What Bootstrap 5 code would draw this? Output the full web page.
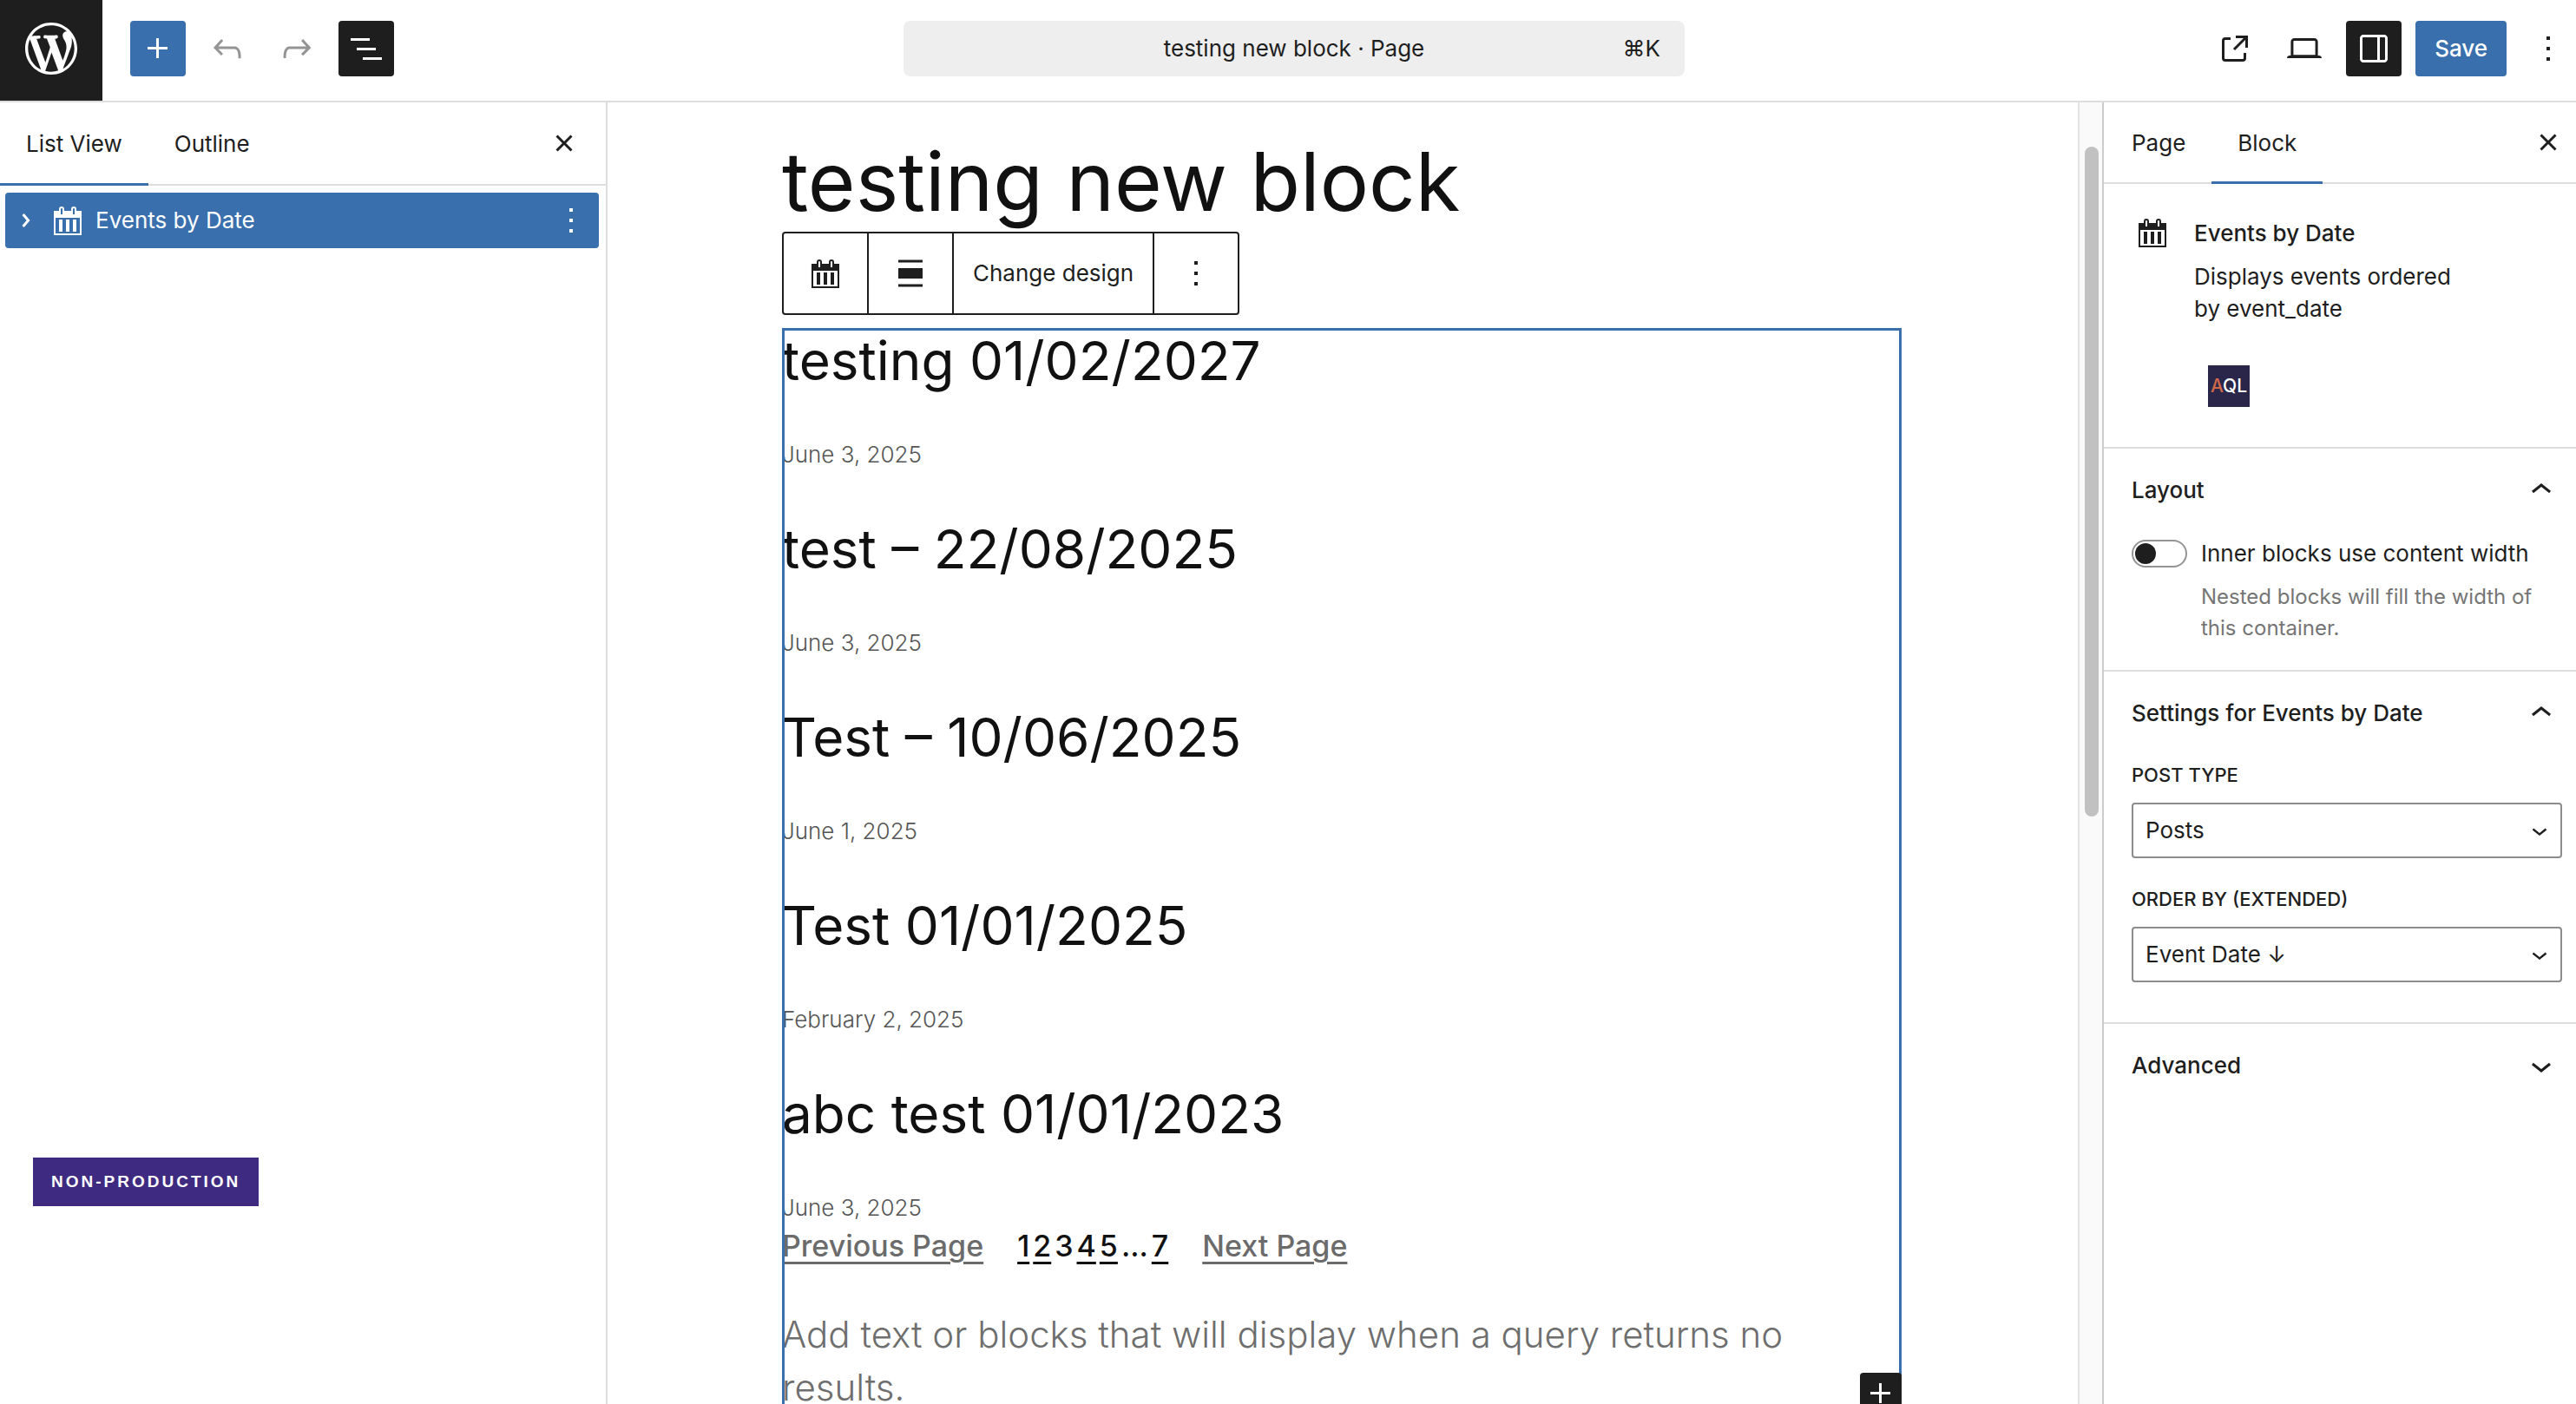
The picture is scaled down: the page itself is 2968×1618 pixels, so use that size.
<!DOCTYPE html>
<html lang="en">
<head>
<meta charset="utf-8">
<meta name="viewport" content="width=device-width, initial-scale=1">
<title>testing new block · Page</title>
<link rel="stylesheet" href="https://cdn.jsdelivr.net/npm/bootstrap@5.3.0/dist/css/bootstrap.min.css">
<style>
:root { --accent:#3a6fae; --ink:#1e1e1e; --rule:#dddddd; }
body { font-family:Inter,"Liberation Sans",sans-serif; font-size:26px; line-height:36px; color:var(--ink); background:#fff; }
button, select, input, label { font:inherit; }
svg { display:block; fill:currentColor; }
.ico { width:48px; height:48px; }
.app { height:100vh; overflow:hidden; }
.topbar { height:118px; border-bottom:2px solid var(--rule); }
.topbar button { margin-top:24px; }
.site-hub { width:118px; height:116px; padding-bottom:4px; background:var(--ink); color:#fff; }
.site-hub svg { width:60px; height:60px; }
.tool { width:64px; height:64px; padding:0; border:0; border-radius:4px; background:transparent; color:var(--ink); display:flex; align-items:center; justify-content:center; }
.tool.accent { background:var(--accent); color:#fff; }
.tool.pressed { background:var(--ink); color:#fff; }
.tool:disabled { color:#949494; }
.tools-left { gap:16px; flex:1 1 0; }
.tools-right { gap:16px; flex:1 1 0; justify-content:flex-end; }
.command { width:900px; height:64px; margin-left:14px; background:#eee; border:0; border-radius:8px; color:var(--ink); padding:0 28px; }
.command span { flex:1 1 0; }
.save { height:64px; padding:0 22px; border:0; border-radius:4px; background:var(--accent); color:#fff; font-weight:500; }
.side-list { width:700px; border-right:2px solid var(--rule); }
.side-set { width:546px; border-left:2px solid #ccc; }
.tabs { border-bottom:2px solid var(--rule); }
.tab-btn { border:0; background:none; padding:0 30px; color:var(--ink); height:calc(100% + 2px); margin-bottom:-2px; }
.tab-btn.current { box-shadow:inset 0 -3px 0 var(--accent); }
.side-list .tabs { height:96px; padding-right:16px; }
.side-set .tabs { height:94px; padding-left:2px; }
.tree-row { margin:8px 8px 0 6px; height:64px; border-radius:4px; background:var(--accent); color:#fff; }
.tree-row a { color:#fff; text-decoration:none; padding-left:8px; }
.env-flag { margin:auto auto 228px 38px; height:56px; padding:0 21px; line-height:56px; background:#3f2a81; color:#fff; font-family:"Liberation Sans",sans-serif; font-weight:700; font-size:19px; letter-spacing:3px; }
.canvas { border-right:2px solid #e2e2e2; padding:36px 2px 0 0; overflow:hidden; color:#111; }
.post { width:1290px; margin:0 auto; }
.post h1 { font-size:94px; line-height:110px; margin:0 0 3px; font-weight:400; }
.blockbar { height:96px; border:2px solid var(--ink); border-radius:4px; background:#fff; width:max-content; position:relative; margin-bottom:15px; }
.blockbar button { border:0; background:none; color:var(--ink); padding:0 24px; height:100%; }
.blockbar .txt { padding:0 22px; }
.blockbar button + button { border-left:2px solid var(--ink); }
.query { position:relative; height:1400px; padding-top:1px; }
.query::after { content:""; position:absolute; inset:0; border:3px solid var(--accent); pointer-events:none; }
.entry { margin-bottom:51px; }
.entry:last-of-type { margin-bottom:0; }
.entry h2 { font-size:62px; line-height:73px; margin:0 0 51px; font-weight:400; }
.entry time { display:block; font-size:26px; line-height:42px; font-weight:300; color:#555; }
.pager { gap:39px; font-size:34px; line-height:46px; font-weight:500; }
.pager a { color:#6b6b6b; text-decoration-thickness:3px; text-underline-offset:6px; }
.pager .nums { gap:4px; }
.pager .nums a { color:#111; }
.empty-note { font-size:42px; line-height:61px; font-weight:300; color:#6e6e6e; margin:48px 0 0; }
.appender { position:absolute; right:0; top:1204px; width:48px; height:48px; border:0; padding:0; border-radius:4px; background:var(--ink); color:#fff; z-index:2; }
.track { width:26px; background:#fafafa; padding:51px 4px 0 6px; }
.thumb { height:772px; border-radius:8px; background:#c1c1c1; }
.pane { padding:24px 16px 30px 32px; border-bottom:2px solid var(--rule); }
.pane:last-child { border-bottom:0; }
.pane-head { border:0; background:none; padding:0; width:100%; font-weight:500; color:var(--ink); }
.cardhead { height:305px; padding:32px 32px 0; border-bottom:2px solid var(--rule); }
.cardhead h2 { font-size:26px; line-height:40px; font-weight:500; margin:5px 0 11px; }
.cardhead p { line-height:37px; margin:0; width:310px; }
.aql { width:48px; height:48px; background:#29264a; color:#fff; font-size:21px; line-height:48px; font-weight:500; text-align:center; margin:47px 0 0 16px; }
.aql b { color:#d0694a; font-weight:500; }
.inner-row { margin:31px 0 0; padding:0; }
.form-check-input.knob { width:64px; height:32px; margin:0; border:2px solid #949494; flex:none; border-radius:16px; background-size:24px 24px; background-repeat:no-repeat; background-position:2px center; background-image:url("data:image/svg+xml,%3Csvg xmlns='http://www.w3.org/2000/svg' viewBox='0 0 24 24'%3E%3Ccircle cx='12' cy='12' r='12' fill='%231e1e1e'/%3E%3C/svg%3E"); }
.hint { font-size:24px; color:#757575; margin:14px 0 0 80px; }
.cap { display:block; font-size:22px; line-height:28px; font-weight:500; text-transform:uppercase; margin:33px 0 18px; }
.form-select.pick { height:64px; border:2px solid #8c8c8c; border-radius:4px; padding:0 48px 0 14px; color:var(--ink); font-size:26px; line-height:36px; background-size:36px 36px; background-position:right 6px center; background-image:url("data:image/svg+xml,%3Csvg xmlns='http://www.w3.org/2000/svg' viewBox='0 0 24 24'%3E%3Cpath fill='%231e1e1e' d='M17.5 11.6L12 16l-5.5-4.4.9-1.2L12 14l4.5-3.6 1 1.2z'/%3E%3C/svg%3E"); }
.pick:last-child { margin-bottom:16px; }
</style>
<script src="https://cdn.jsdelivr.net/npm/bootstrap@5.3.0/dist/js/bootstrap.bundle.min.js"></script>
</head>
<body>
<svg width="0" height="0" class="position-absolute" aria-hidden="true">
  <symbol id="i-plus" viewBox="0 0 24 24"><path d="M11 12.5V17.5H12.5V12.5H17.5V11H12.5V6H11V11H6V12.5H11Z"/></symbol>
  <symbol id="i-more" viewBox="0 0 24 24"><path d="M13 19h-2v-2h2v2zm0-6h-2v-2h2v2zm0-6h-2V5h2v2z"/></symbol>
  <symbol id="i-close" viewBox="0 0 24 24"><path d="M12 13.06l3.712 3.713 1.061-1.06L13.061 12l3.712-3.712-1.06-1.06L12 10.938 8.288 7.227l-1.061 1.06L10.939 12l-3.712 3.712 1.06 1.061L12 13.061z"/></symbol>
  <symbol id="i-up" viewBox="0 0 24 24"><path d="M6.5 12.4L12 8l5.5 4.4-.9 1.2L12 10l-4.5 3.6-1-1.2z"/></symbol>
  <symbol id="i-down" viewBox="0 0 24 24"><path d="M17.5 11.6L12 16l-5.5-4.4.9-1.2L12 14l4.5-3.6 1 1.2z"/></symbol>
  <symbol id="i-cal" viewBox="0 0 48 48"><path fill-rule="evenodd" d="M8 13h6v-2a3 3 0 0 1 6 0v2h8v-2a3 3 0 0 1 6 0v2h6v28H8zM10 21v18h28V21zM16 11v6h2v-6a1 1 0 0 0-2 0zm14 0v6h2v-6a1 1 0 0 0-2 0zM14 23h4v14h-4zm8 0h4v14h-4zm8 0h4v14h-4z"/></symbol>
</svg>
<div class="app d-flex flex-column">
  <header class="topbar d-flex align-items-start flex-shrink-0">
    <div class="tools-left d-flex align-items-start">
      <a href="#" class="site-hub d-flex align-items-center justify-content-center me-3" aria-label="View pages"><svg viewBox="0 0 20 20"><path d="M20 10c0-5.51-4.49-10-10-10C4.48 0 0 4.49 0 10c0 5.52 4.48 10 10 10 5.51 0 10-4.48 10-10zM7.78 15.37L4.37 6.22c.55-.02 1.17-.08 1.17-.08.5-.06.44-1.13-.06-1.11 0 0-1.45.11-2.37.11-.18 0-.37 0-.58-.01C4.12 2.69 6.87 1.11 10 1.11c2.33 0 4.45.87 6.05 2.34-.68-.11-1.65.39-1.65 1.58 0 .74.45 1.36.9 2.1.35.61.55 1.36.55 2.46 0 1.49-1.4 5-1.4 5l-3.03-8.37c.54-.02.82-.17.82-.17.5-.05.44-1.25-.06-1.22 0 0-1.44.12-2.38.12-.87 0-2.33-.12-2.33-.12-.5-.03-.56 1.2-.06 1.22l.92.08 1.26 3.41zM17.41 10c.24-.64.74-1.87.43-4.25.7 1.29 1.05 2.71 1.05 4.25 0 3.29-1.73 6.24-4.4 7.78.97-2.59 1.94-5.2 2.92-7.78zM6.1 18.09C3.12 16.65 1.11 13.53 1.11 10c0-1.3.23-2.48.72-3.59C3.25 10.3 4.67 14.2 6.1 18.09zm4.03-6.63l2.58 6.98c-.86.29-1.76.45-2.71.45-.79 0-1.57-.11-2.29-.33.81-2.38 1.62-4.74 2.42-7.1z"/></svg></a>
      <button class="tool accent" aria-label="Block inserter"><svg class="ico"><use href="#i-plus"/></svg></button>
      <button class="tool" disabled aria-label="Undo"><svg class="ico" viewBox="0 0 24 24"><path d="M18.3 11.7c-.6-.6-1.4-.9-2.3-.9H6.7l2.9-3.3-1.1-1-4.5 5L8.5 16l1-1-2.7-2.7H16c.5 0 .9.2 1.3.5 1 1 1 3.4 1 4.5v.3h1.5v-.2c0-1.5 0-4.3-1.5-5.7z"/></svg></button>
      <button class="tool" disabled aria-label="Redo"><svg class="ico" viewBox="0 0 24 24"><path d="M15.6 6.5l-1.1 1 2.9 3.3H8c-.9 0-1.7.3-2.3.9-1.4 1.5-1.4 4.2-1.4 5.6v.2h1.5v-.3c0-1.1 0-3.5 1-4.5.3-.3.7-.5 1.3-.5h9.2L14.5 15l1.1 1.1 4.6-4.6-4.6-5z"/></svg></button>
      <button class="tool pressed" aria-label="Document overview"><svg class="ico" viewBox="0 0 24 24"><path d="M3 6h11v1.5H3V6Zm3.5 5.5h11V13h-11v-1.5ZM21 17H10v1.5h11V17Z"/></svg></button>
    </div>
    <button class="command d-flex align-items-center"><span></span>testing new block · Page<span class="text-end">⌘K</span></button>
    <div class="tools-right d-flex align-items-start">
      <button class="tool" aria-label="View page"><svg class="ico" viewBox="0 0 24 24"><path d="M19.5 4.5h-7V6h4.44l-5.97 5.97 1.06 1.06L18 7.06v4.44h1.5v-7Zm-13 1a2 2 0 0 0-2 2v10a2 2 0 0 0 2 2h10a2 2 0 0 0 2-2v-3H17v3a.5.5 0 0 1-.5.5h-10a.5.5 0 0 1-.5-.5v-10a.5.5 0 0 1 .5-.5h3V5.5h-3Z"/></svg></button>
      <button class="tool" aria-label="Preview"><svg class="ico" viewBox="0 0 24 24"><path d="M20.5 16h-.7V8c0-1.1-.9-2-2-2H6.2c-1.1 0-2 .9-2 2v8h-.7c-.8 0-1.5.7-1.5 1.5h20c0-.8-.7-1.5-1.5-1.5zM5.7 8c0-.3.2-.5.5-.5h11.6c.3 0 .5.2.5.5v7.6H5.7V8z"/></svg></button>
      <button class="tool pressed" aria-label="Settings"><svg class="ico" viewBox="0 0 24 24"><path fill-rule="evenodd" d="M18 4H6c-1.1 0-2 .9-2 2v12c0 1.1.9 2 2 2h12c1.1 0 2-.9 2-2V6c0-1.1-.9-2-2-2zm-4 14.5H6c-.3 0-.5-.2-.5-.5V6c0-.3.2-.5.5-.5h8v13zm4.5-.5c0 .3-.2.5-.5.5h-2.5v-13H18c.3 0 .5.2.5.5v12z"/></svg></button>
      <button class="save">Save</button>
      <button class="tool" aria-label="Options"><svg class="ico"><use href="#i-more"/></svg></button>
    </div>
  </header>
  <div class="d-flex flex-grow-1 overflow-hidden">
    <aside class="side-list d-flex flex-column flex-shrink-0">
      <div class="tabs d-flex align-items-center flex-shrink-0">
        <button class="tab-btn current">List View</button>
        <button class="tab-btn">Outline</button>
        <button class="tool ms-auto" aria-label="Close"><svg class="ico"><use href="#i-close"/></svg></button>
      </div>
      <div class="tree-row d-flex align-items-center flex-shrink-0">
        <svg class="ico" viewBox="0 0 24 24"><path d="M10.8622 8.04053L14.2805 12.0286L10.8622 16.0167L9.72327 15.0405L12.3049 12.0286L9.72327 9.01672L10.8622 8.04053Z"/></svg>
        <svg class="ico"><use href="#i-cal"/></svg>
        <a href="#">Events by Date</a>
        <button class="tool ms-auto text-white" aria-label="Options"><svg class="ico"><use href="#i-more"/></svg></button>
      </div>
      <div class="env-flag">NON-PRODUCTION</div>
    </aside>
    <main class="canvas flex-grow-1">
      <div class="post">
        <h1>testing new block</h1>
        <div class="blockbar d-flex">
          <button aria-label="Events by Date"><svg class="ico"><use href="#i-cal"/></svg></button>
          <button aria-label="Align"><svg class="ico" viewBox="0 0 24 24"><path d="M5 15h14V9H5v6zm0 4.8h14v-1.5H5v1.5zM5 4.2v1.5h14V4.2H5z"/></svg></button>
          <button class="txt">Change design</button>
          <button aria-label="Options"><svg class="ico"><use href="#i-more"/></svg></button>
        </div>
        <section class="query">
          <article class="entry"><h2>testing 01/02/2027</h2><time>June 3, 2025</time></article>
          <article class="entry"><h2>test – 22/08/2025</h2><time>June 3, 2025</time></article>
          <article class="entry"><h2>Test – 10/06/2025</h2><time>June 1, 2025</time></article>
          <article class="entry"><h2>Test 01/01/2025</h2><time>February 2, 2025</time></article>
          <article class="entry"><h2>abc test 01/01/2023</h2><time>June 3, 2025</time></article>
          <nav class="pager d-flex" aria-label="Pagination">
            <a href="#">Previous Page</a>
            <div class="nums d-flex"><a href="#">1</a><a href="#">2</a><span>3</span><a href="#">4</a><a href="#">5</a><span>...</span><a href="#">7</a></div>
            <a href="#">Next Page</a>
          </nav>
          <p class="empty-note">Add text or blocks that will display when a query returns no results.</p>
          <button class="appender" aria-label="Add block"><svg class="ico"><use href="#i-plus"/></svg></button>
        </section>
      </div>
    </main>
    <div class="track flex-shrink-0"><div class="thumb"></div></div>
    <aside class="side-set flex-shrink-0">
      <div class="tabs d-flex align-items-center">
        <button class="tab-btn">Page</button>
        <button class="tab-btn current">Block</button>
        <button class="tool ms-auto" aria-label="Close"><svg class="ico"><use href="#i-close"/></svg></button>
      </div>
      <div class="cardhead d-flex align-items-start">
        <svg class="ico flex-shrink-0"><use href="#i-cal"/></svg>
        <div class="ms-4">
          <h2>Events by Date</h2>
          <p>Displays events ordered by event_date</p>
          <div class="aql"><b>A</b>QL</div>
        </div>
      </div>
      <section class="pane">
        <button class="pane-head d-flex justify-content-between align-items-center">Layout <svg class="ico"><use href="#i-up"/></svg></button>
        <div class="form-switch inner-row d-flex align-items-center gap-3">
          <input class="form-check-input knob" type="checkbox" role="switch" id="inner"><label for="inner">Inner blocks use content width</label>
        </div>
        <p class="hint">Nested blocks will fill the width of this container.</p>
      </section>
      <section class="pane">
        <button class="pane-head d-flex justify-content-between align-items-center">Settings for Events by Date <svg class="ico"><use href="#i-up"/></svg></button>
        <label class="cap" for="ptype">Post type</label>
        <select class="form-select pick" id="ptype"><option>Posts</option></select>
        <label class="cap" for="order">Order by (extended)</label>
        <select class="form-select pick" id="order"><option>Event Date ↓</option></select>
      </section>
      <section class="pane">
        <button class="pane-head d-flex justify-content-between align-items-center">Advanced <svg class="ico"><use href="#i-down"/></svg></button>
      </section>
    </aside>
  </div>
</div>
</body>
</html>
